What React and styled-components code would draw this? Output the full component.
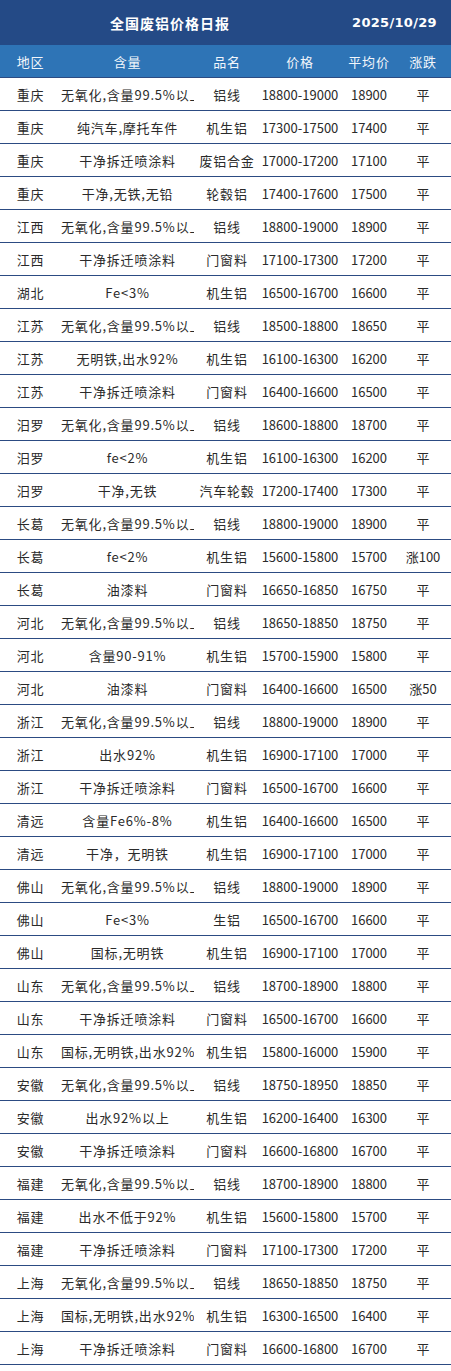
import React from 'react';
import styled, { createGlobalStyle } from 'styled-components';

const rows = [
  ['重庆', '无氧化,含量99.5%以上', '铝线', '18800-19000', '18900', '平'],
  ['重庆', '纯汽车,摩托车件', '机生铝', '17300-17500', '17400', '平'],
  ['重庆', '干净拆迁喷涂料', '废铝合金', '17000-17200', '17100', '平'],
  ['重庆', '干净,无铁,无铅', '轮毂铝', '17400-17600', '17500', '平'],
  ['江西', '无氧化,含量99.5%以上', '铝线', '18800-19000', '18900', '平'],
  ['江西', '干净拆迁喷涂料', '门窗料', '17100-17300', '17200', '平'],
  ['湖北', 'Fe<3%', '机生铝', '16500-16700', '16600', '平'],
  ['江苏', '无氧化,含量99.5%以上', '铝线', '18500-18800', '18650', '平'],
  ['江苏', '无明铁,出水92%', '机生铝', '16100-16300', '16200', '平'],
  ['江苏', '干净拆迁喷涂料', '门窗料', '16400-16600', '16500', '平'],
  ['汨罗', '无氧化,含量99.5%以上', '铝线', '18600-18800', '18700', '平'],
  ['汨罗', 'fe<2%', '机生铝', '16100-16300', '16200', '平'],
  ['汨罗', '干净,无铁', '汽车轮毂', '17200-17400', '17300', '平'],
  ['长葛', '无氧化,含量99.5%以上', '铝线', '18800-19000', '18900', '平'],
  ['长葛', 'fe<2%', '机生铝', '15600-15800', '15700', '涨100'],
  ['长葛', '油漆料', '门窗料', '16650-16850', '16750', '平'],
  ['河北', '无氧化,含量99.5%以上', '铝线', '18650-18850', '18750', '平'],
  ['河北', '含量90-91%', '机生铝', '15700-15900', '15800', '平'],
  ['河北', '油漆料', '门窗料', '16400-16600', '16500', '涨50'],
  ['浙江', '无氧化,含量99.5%以上', '铝线', '18800-19000', '18900', '平'],
  ['浙江', '出水92%', '机生铝', '16900-17100', '17000', '平'],
  ['浙江', '干净拆迁喷涂料', '门窗料', '16500-16700', '16600', '平'],
  ['清远', '含量Fe6%-8%', '机生铝', '16400-16600', '16500', '平'],
  ['清远', '干净，无明铁', '机生铝', '16900-17100', '17000', '平'],
  ['佛山', '无氧化,含量99.5%以上', '铝线', '18800-19000', '18900', '平'],
  ['佛山', 'Fe<3%', '生铝', '16500-16700', '16600', '平'],
  ['佛山', '国标,无明铁', '机生铝', '16900-17100', '17000', '平'],
  ['山东', '无氧化,含量99.5%以上', '铝线', '18700-18900', '18800', '平'],
  ['山东', '干净拆迁喷涂料', '门窗料', '16500-16700', '16600', '平'],
  ['山东', '国标,无明铁,出水92%', '机生铝', '15800-16000', '15900', '平'],
  ['安徽', '无氧化,含量99.5%以上', '铝线', '18750-18950', '18850', '平'],
  ['安徽', '出水92%以上', '机生铝', '16200-16400', '16300', '平'],
  ['安徽', '干净拆迁喷涂料', '门窗料', '16600-16800', '16700', '平'],
  ['福建', '无氧化,含量99.5%以上', '铝线', '18700-18900', '18800', '平'],
  ['福建', '出水不低于92%', '机生铝', '15600-15800', '15700', '平'],
  ['福建', '干净拆迁喷涂料', '门窗料', '17100-17300', '17200', '平'],
  ['上海', '无氧化,含量99.5%以上', '铝线', '18650-18850', '18750', '平'],
  ['上海', '国标,无明铁,出水92%', '机生铝', '16300-16500', '16400', '平'],
  ['上海', '干净拆迁喷涂料', '门窗料', '16600-16800', '16700', '平'],
];

const headers = ['地区', '含量', '品名', '价格', '平均价', '涨跌'];

// columns holding Chinese text get a little extra tracking
const spacedCols = [true, true, true, false, false, false];

const GlobalStyle = createGlobalStyle`
  body {
    margin: 0;
    background: #ffffff;
    font-family: "Noto Sans CJK SC", "Noto Sans", sans-serif;
  }
`;

const Sheet = styled.div`
  width: 451px;
  padding-bottom: 6px;
  background: #ffffff;
`;

const TitleBar = styled.div`
  display: grid;
  grid-template-columns: 340px 1fr;
  align-items: center;
  height: 45px;
  background: #244a86;
  color: #ffffff;
  font-weight: 700;
`;

const Title = styled.div`
  text-align: center;
  font-size: 14px;
  letter-spacing: 1px;
`;

const DateText = styled.div`
  text-align: center;
  font-family: "DejaVu Sans", "Noto Sans", sans-serif;
  font-size: 13px;
  letter-spacing: 0.3px;
  padding-right: 2px;
`;

const Row = styled.div`
  display: grid;
  grid-template-columns: 61px 133px 66px 80px 58px 50px 1fr;
  align-items: center;
  height: 32px;
  border-bottom: 1px solid #2c4b82;
  background: ${(p) => (p.$head ? '#2e74b6' : '#ffffff')};
  color: ${(p) => (p.$head ? '#f2f6fb' : '#2a2a2a')};
  font-size: 13px;
`;

const Cell = styled.div`
  text-align: center;
  white-space: nowrap;
  overflow: hidden;
  padding-top: 2px;
  line-height: 18px;
  letter-spacing: ${(p) => (p.$spaced ? '0.8px' : '0')};
`;

export default function App() {
  return (
    <>
      <GlobalStyle />
      <Sheet>
        <TitleBar>
          <Title>全国废铝价格日报</Title>
          <DateText>2025/10/29</DateText>
        </TitleBar>
        <Row $head>
          {headers.map((h) => (
            <Cell key={h} $spaced>
              {h}
            </Cell>
          ))}
        </Row>
        {rows.map((r, i) => (
          <Row key={i}>
            {r.map((c, j) => (
              <Cell key={j} $spaced={spacedCols[j]}>
                {c}
              </Cell>
            ))}
          </Row>
        ))}
      </Sheet>
    </>
  );
}
